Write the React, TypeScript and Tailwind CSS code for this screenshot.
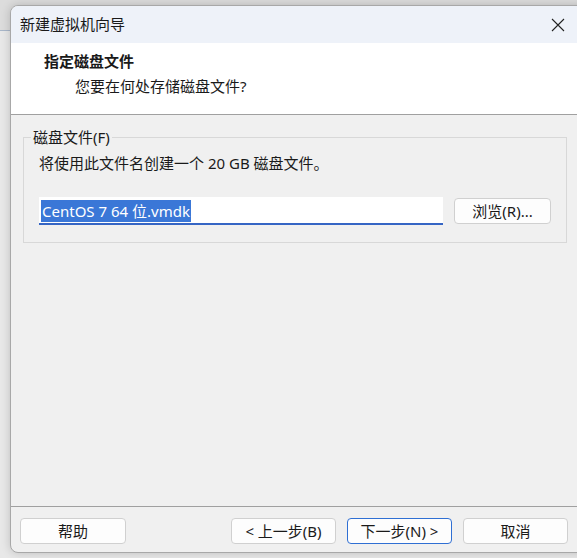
import React from "react";

function Btn({ children, primary = false, className = "" }: { children: React.ReactNode; primary?: boolean; className?: string }) {
  return (
    <div
      className={
        "flex h-[26px] items-center justify-center rounded-[4px] bg-[#fdfdfd] text-[15px] leading-none text-[#1a1a1a] " +
        (primary ? "border border-[#2f6fd3] " : "border border-[#d0d0d0] ") +
        className
      }
    >
      {children}
    </div>
  );
}

export default function App() {
  return (
    <div className="h-[558px] w-[577px] overflow-hidden bg-[linear-gradient(to_bottom,#dcdcdc_0,#dcdcdc_30px,#a9b7c9_30px,#a9b7c9_31px,#e8e8e8_31px)] pl-[10px] pt-[5px] font-['Segoe_UI','Noto_Sans','Noto_Sans_CJK_SC',sans-serif] text-[#1a1a1a]">
      <div className="flex h-[548px] w-[580px] flex-col overflow-hidden rounded-[8px] border border-[#a8a8a8] bg-[#f0f0f0] shadow-[0_0_10px_rgba(0,0,0,0.18)]">
        {/* Title bar */}
        <div className="flex h-[37px] shrink-0 items-center bg-[#eef2f9] pl-[9px]">
          <span className="text-[15px] leading-none">新建虚拟机向导</span>
          <div className="flex-1" />
          <div className="mr-[11px] flex w-[40px] items-center justify-center">
            <svg width="14" height="14" viewBox="0 0 14 14">
              <path d="M1 1 L13 13 M13 1 L1 13" stroke="#222" strokeWidth="1.1" fill="none" />
            </svg>
          </div>
        </div>
        {/* Header */}
        <div className="flex h-[72px] shrink-0 flex-col border-b border-[#a0a0a0] bg-white pl-[33px] pt-[9px]">
          <div className="text-[15px] font-bold leading-[18px]">指定磁盘文件</div>
          <div className="mt-[7px] pl-[31px] text-[15px] leading-[18px]">您要在何处存储磁盘文件?</div>
        </div>
        {/* Content */}
        <div className="flex flex-1 flex-col px-[12px] pt-[22px]">
          <div className="relative h-[106px] w-[544px] border border-[#d8d8d8]">
            <div className="absolute left-[7px] top-[-10px] bg-[#f0f0f0] px-[2px] text-[15px] leading-[18px]">磁盘文件(F)</div>
            <div className="pl-[15px] pt-[16px] text-[15px] leading-[18px]">将使用此文件名创建一个 20 GB 磁盘文件。</div>
            <div className="mt-[25px] flex items-center pl-[15px]">
              <div className="flex h-[28px] w-[404px] items-center border-b-2 border-[#3565c4] bg-white pl-[2px] pt-[2px]">
                <span className="bg-[#3a77d7] px-[1px] text-[15px] leading-[22px] text-white">CentOS 7 64 位.vmdk</span>
              </div>
              <Btn className="ml-[11px] w-[97px]">浏览(R)...</Btn>
            </div>
          </div>
          <div className="flex-1" />
        </div>
        {/* Footer */}
        <div className="flex h-[46px] shrink-0 items-start border-t border-[#a0a0a0] pl-[9px] pt-[11px]">
          <Btn className="w-[106px]">帮助</Btn>
          <div className="w-[105px]" />
          <Btn className="w-[105px]">&lt; 上一步(B)</Btn>
          <Btn primary className="ml-[11px] w-[105px]">下一步(N) &gt;</Btn>
          <Btn className="ml-[11px] w-[105px]">取消</Btn>
        </div>
      </div>
    </div>
  );
}
